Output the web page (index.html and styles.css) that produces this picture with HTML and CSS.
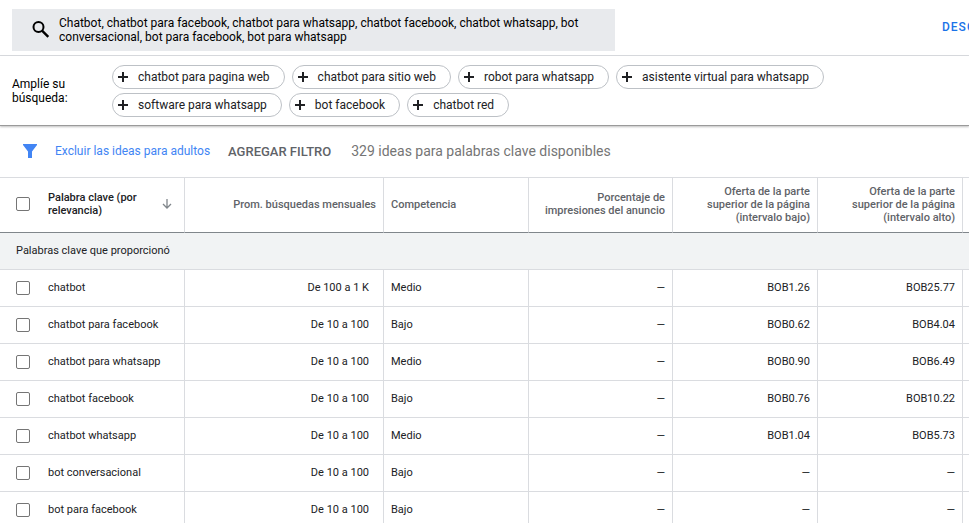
FILE: index.html
```html
<!DOCTYPE html>
<html lang="es">
<head>
<meta charset="UTF-8">
<meta name="viewport" content="width=device-width, initial-scale=1.0">
<title>Ideas para palabras clave</title>
<link rel="stylesheet" href="styles.css">
</head>
<body>
<header class="search-bar">
    <div class="search-box">
        <svg class="search-icon" viewBox="0 0 18 18" aria-hidden="true">
            <circle cx="6.5" cy="6" r="5" fill="none" stroke="#000" stroke-width="2"/>
            <path d="M10.3 9.8L16.3 15.8" stroke="#000" stroke-width="2.4"/>
        </svg>
        <textarea class="search-text" rows="2" aria-label="Palabras clave">Chatbot, chatbot para facebook, chatbot para whatsapp, chatbot facebook, chatbot whatsapp, bot conversacional, bot para facebook, bot para whatsapp</textarea>
    </div>
    <div class="search-actions">
        <button class="download-btn" type="button">DESCARGAR</button>
    </div>
</header>
<section class="broaden">
    <div class="broaden-label">Amplíe su búsqueda:</div>
    <div class="chips">
        <button class="chip" type="button"><span class="plus"></span>chatbot para pagina web</button>
        <button class="chip" type="button"><span class="plus"></span>chatbot para sitio web</button>
        <button class="chip" type="button"><span class="plus"></span>robot para whatsapp</button>
        <button class="chip" type="button"><span class="plus"></span>asistente virtual para whatsapp</button>
        <button class="chip" type="button"><span class="plus"></span>software para whatsapp</button>
        <button class="chip" type="button"><span class="plus"></span>bot facebook</button>
        <button class="chip" type="button"><span class="plus"></span>chatbot red</button>
    </div>
</section>
<div class="filters">
    <svg class="filter-icon" viewBox="0 0 14 14" aria-hidden="true">
        <path d="M0 0h14v1L9 7.5V14H5V7.5L0 1z" fill="#4285f4"/>
    </svg>
    <a class="filter-link" href="#">Excluir las ideas para adultos</a>
    <button class="add-filter" type="button">AGREGAR FILTRO</button>
    <span class="idea-count">329 ideas para palabras clave disponibles</span>
</div>
<table class="keywords">
    <colgroup>
        <col class="col-check">
        <col class="col-keyword">
        <col class="col-searches">
        <col class="col-data">
        <col class="col-share">
        <col class="col-data">
        <col class="col-data">
        <col>
    </colgroup>
    <thead>
        <tr>
            <th class="check"><input type="checkbox" aria-label="Seleccionar todo"></th>
            <th class="keyword">
                <div class="sort">
                    <span>Palabra clave (por relevancia)</span>
                    <svg class="sort-icon" viewBox="0 0 10 10" aria-hidden="true">
                        <path d="M5 0V9M1 5l4 4l4-4" fill="none" stroke="#80868b" stroke-width="1.3"/>
                    </svg>
                </div>
            </th>
            <th class="num">Prom. búsquedas mensuales</th>
            <th>Competencia</th>
            <th class="num">Porcentaje de impresiones del anuncio</th>
            <th class="num bid">Oferta de la parte superior de la página (intervalo bajo)</th>
            <th class="num bid">Oferta de la parte superior de la página (intervalo alto)</th>
            <th class="rest"></th>
        </tr>
    </thead>
    <tbody>
        <tr class="group">
            <td colspan="8">Palabras clave que proporcionó</td>
        </tr>
        <tr>
            <td class="check"><input type="checkbox" id="kw1"></td>
            <td class="keyword"><label for="kw1">chatbot</label></td>
            <td class="num searches">De 100 a 1 K</td>
            <td>Medio</td>
            <td class="num">—</td>
            <td class="num">BOB1.26</td>
            <td class="num">BOB25.77</td>
            <td class="rest"></td>
        </tr>
        <tr>
            <td class="check"><input type="checkbox" id="kw2"></td>
            <td class="keyword"><label for="kw2">chatbot para facebook</label></td>
            <td class="num searches">De 10 a 100</td>
            <td>Bajo</td>
            <td class="num">—</td>
            <td class="num">BOB0.62</td>
            <td class="num">BOB4.04</td>
            <td class="rest"></td>
        </tr>
        <tr>
            <td class="check"><input type="checkbox" id="kw3"></td>
            <td class="keyword"><label for="kw3">chatbot para whatsapp</label></td>
            <td class="num searches">De 10 a 100</td>
            <td>Medio</td>
            <td class="num">—</td>
            <td class="num">BOB0.90</td>
            <td class="num">BOB6.49</td>
            <td class="rest"></td>
        </tr>
        <tr>
            <td class="check"><input type="checkbox" id="kw4"></td>
            <td class="keyword"><label for="kw4">chatbot facebook</label></td>
            <td class="num searches">De 10 a 100</td>
            <td>Bajo</td>
            <td class="num">—</td>
            <td class="num">BOB0.76</td>
            <td class="num">BOB10.22</td>
            <td class="rest"></td>
        </tr>
        <tr>
            <td class="check"><input type="checkbox" id="kw5"></td>
            <td class="keyword"><label for="kw5">chatbot whatsapp</label></td>
            <td class="num searches">De 10 a 100</td>
            <td>Medio</td>
            <td class="num">—</td>
            <td class="num">BOB1.04</td>
            <td class="num">BOB5.73</td>
            <td class="rest"></td>
        </tr>
        <tr>
            <td class="check"><input type="checkbox" id="kw6"></td>
            <td class="keyword"><label for="kw6">bot conversacional</label></td>
            <td class="num searches">De 10 a 100</td>
            <td>Bajo</td>
            <td class="num">—</td>
            <td class="num">—</td>
            <td class="num">—</td>
            <td class="rest"></td>
        </tr>
        <tr>
            <td class="check"><input type="checkbox" id="kw7"></td>
            <td class="keyword"><label for="kw7">bot para facebook</label></td>
            <td class="num searches">De 10 a 100</td>
            <td>Bajo</td>
            <td class="num">—</td>
            <td class="num">—</td>
            <td class="num">—</td>
            <td class="rest"></td>
        </tr>
    </tbody>
</table>
</body>
</html>
```

FILE: styles.css
```css
* {
    margin: 0;
    padding: 0;
    box-sizing: border-box;
    font-family: Roboto, sans-serif;
}
body {
    background: #fff;
    color: #202124;
    overflow: hidden;
}
.search-bar {
    display: flex;
    justify-content: space-between;
    padding: 9px 0 4px 12px;
    border-bottom: 1px solid #dadce0;
}
.search-box {
    display: flex;
    align-items: center;
    flex: 0 1 603px;
    height: 42px;
    padding: 0 16px 0 20px;
    background: #e8eaed;
}
.search-icon {
    flex: none;
    width: 18px;
    height: 18px;
    margin-right: 9px;
}
.search-text {
    flex: 1;
    border: none;
    outline: none;
    resize: none;
    overflow: hidden;
    background: transparent;
    color: #000;
    font-size: 12px;
    line-height: 14px;
}
.search-actions {
    flex: none;
    width: 27px;
    padding-top: 7px;
    overflow: hidden;
}
.download-btn {
    border: none;
    background: none;
    color: #1a73e8;
    font-size: 12px;
    font-weight: 500;
    line-height: 16px;
    letter-spacing: 1px;
    white-space: nowrap;
}
.broaden {
    display: flex;
    align-items: center;
    padding: 9px 12px 8px;
    border-bottom: 1px solid #9a9a9a;
    box-shadow: 0 1px 2px rgba(0, 0, 0, 0.25);
}
.broaden-label {
    flex: none;
    width: 100px;
    padding-right: 36px;
    color: #000;
    font-size: 12px;
    line-height: 14px;
}
.chips {
    display: flex;
    flex-wrap: wrap;
    flex: 0 1 740px;
    gap: 4px 7px;
}
.chip {
    display: flex;
    align-items: center;
    height: 24px;
    padding: 0 14px 0 5px;
    border: 1px solid #bdc1c6;
    border-radius: 12px;
    background: #fff;
    color: #202124;
    font-size: 12px;
    line-height: 16px;
}
.plus {
    width: 10px;
    height: 10px;
    margin-right: 10px;
    background:
        linear-gradient(#202124, #202124) center / 10px 2px no-repeat,
        linear-gradient(#202124, #202124) center / 2px 10px no-repeat;
}
.filters {
    display: flex;
    align-items: center;
    height: 51px;
    padding: 0 0 1px 23px;
    white-space: nowrap;
}
.filter-icon {
    width: 14px;
    height: 14px;
    margin-right: 18px;
}
.filter-link {
    margin-right: 18px;
    color: #4285f4;
    font-size: 12px;
    text-decoration: none;
}
.add-filter {
    margin-right: 20px;
    border: none;
    background: none;
    color: #5f6368;
    font-size: 13px;
    font-weight: 500;
}
.idea-count {
    color: #757575;
    font-size: 14px;
}
.keywords {
    width: 100%;
    table-layout: fixed;
    border-collapse: separate;
    border-spacing: 0;
    border-top: 1px solid #dadce0;
    font-size: 11px;
    line-height: 13px;
}
.col-check {
    width: 40px;
}
.col-keyword {
    width: 145px;
}
.col-searches {
    width: 199px;
}
.col-data {
    width: 145px;
}
.col-share {
    width: 144px;
}
.keywords th,
.keywords td {
    height: 37px;
    padding: 0 7px 2px;
    border-right: 1px solid #dadce0;
    border-bottom: 1px solid #dadce0;
    text-align: left;
}
.keywords th {
    height: 55px;
    border-bottom-color: #80868b;
    color: #5f6368;
    font-weight: 500;
}
.keywords .num {
    text-align: right;
}
.keywords .bid {
    padding-left: 24px;
}
.keywords .searches {
    padding-right: 14px;
}
.keywords .check {
    padding-left: 16px;
    padding-right: 0;
    border-right: none;
}
.keywords td.check {
    padding-bottom: 0;
}
.keywords .keyword {
    padding-left: 8px;
    color: #202124;
}
.keywords .rest {
    padding: 0;
    border-right: none;
}
.keywords .group td {
    padding-left: 16px;
    border-right: none;
    background: #f1f3f4;
}
.check input {
    display: block;
    appearance: none;
    width: 14px;
    height: 14px;
    border: 1px solid #757575;
    border-radius: 2px;
    background: #fff;
}
.sort {
    display: flex;
    align-items: center;
    justify-content: space-between;
    padding-right: 5px;
}
.sort-icon {
    flex: none;
    width: 10px;
    height: 10px;
}
```
